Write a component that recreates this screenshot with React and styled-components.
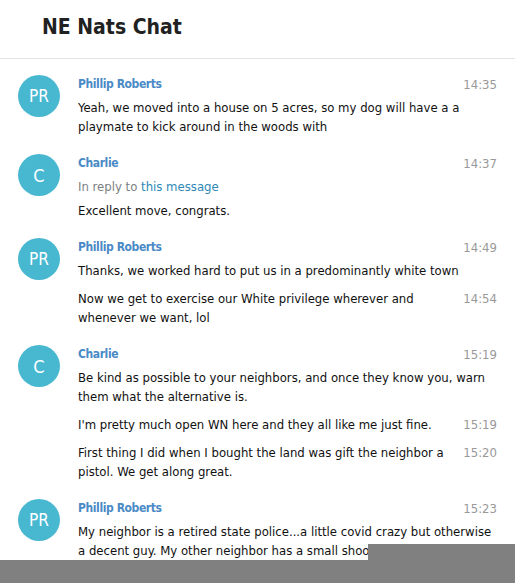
import React from "react";
import styled, { createGlobalStyle } from "styled-components";

const GlobalStyle = createGlobalStyle`
  html, body { margin: 0; padding: 0; background: #ffffff; }
  body { font-family: "DejaVu Sans Condensed", "DejaVu Sans", Verdana, sans-serif; color: #111; }
`;

const Page = styled.div`
  position: relative;
  width: 515px;
  height: 583px;
  overflow: hidden;
  background: #fff;
`;

const Header = styled.header`
  height: 59px;
  box-sizing: border-box;
  padding: 14px 42px 0;
  border-bottom: 1px solid #e3e3e3;
`;

const Title = styled.h1`
  margin: 0;
  font-size: 21px;
  line-height: 26px;
  font-weight: 700;
  color: #212121;
`;

const List = styled.main`
  display: flex;
  flex-direction: column;
  gap: 18px;
  padding: 16px 18px 0 18px;
`;

const Group = styled.section`
  display: flex;
  gap: 18px;
  align-items: flex-start;
`;

const Avatar = styled.div`
  flex: 0 0 42px;
  width: 42px;
  height: 42px;
  border-radius: 50%;
  background: #48b8d1;
  color: #fff;
  display: flex;
  align-items: center;
  justify-content: center;
  font-size: ${(p) => (p.$single ? 18 : 17)}px;
  letter-spacing: 0.2px;
`;

const Body = styled.div`
  flex: 1;
  min-width: 0;
  display: flex;
  flex-direction: column;
`;

const NameRow = styled.div`
  display: flex;
  justify-content: space-between;
  align-items: center;
  height: 19px;
  line-height: 19px;
  margin-bottom: 4px;
`;

const Name = styled.span`
  font-size: 12px;
  line-height: 19px;
  letter-spacing: -0.4px;
  font-weight: 700;
  color: #4a8ac6;
`;

const Time = styled.span`
  flex: 0 0 auto;
  font-size: 13px;
  line-height: 19px;
  color: #999;
`;

const Reply = styled.div`
  font-size: 13px;
  line-height: 19px;
  color: #7a7f83;
  padding-bottom: 5px;
`;

const ReplyLink = styled.span`
  color: #2e88b6;
`;

const Text = styled.div`
  font-size: 13px;
  line-height: 19px;
  color: #111;
`;

const Joined = styled.div`
  display: flex;
  gap: 10px;
  align-items: flex-start;
  margin-top: 9px;
`;

const JoinedText = styled(Text)`
  flex: 1;
  min-width: 0;
`;

const Redaction = styled.div`
  position: absolute;
  background: #808080;
  right: 0;
  bottom: 0;
  left: ${(p) => p.$left}px;
  top: ${(p) => p.$top}px;
`;

const groups = [
  {
    initials: "PR",
    name: "Phillip Roberts",
    time: "14:35",
    text: "Yeah, we moved into a house on 5 acres, so my dog will have a a playmate to kick around in the woods with",
    more: [],
  },
  {
    initials: "C",
    name: "Charlie",
    time: "14:37",
    reply: true,
    text: "Excellent move, congrats.",
    more: [],
  },
  {
    initials: "PR",
    name: "Phillip Roberts",
    time: "14:49",
    text: "Thanks, we worked hard to put us in a predominantly white town",
    more: [
      { time: "14:54", text: "Now we get to exercise our White privilege wherever and whenever we want, lol" },
    ],
  },
  {
    initials: "C",
    name: "Charlie",
    time: "15:19",
    text: "Be kind as possible to your neighbors, and once they know you, warn them what the alternative is.",
    more: [
      { time: "15:19", text: "I'm pretty much open WN here and they all like me just fine." },
      { time: "15:20", text: "First thing I did when I bought the land was gift the neighbor a pistol. We get along great." },
    ],
  },
  {
    initials: "PR",
    name: "Phillip Roberts",
    time: "15:23",
    text: "My neighbor is a retired state police...a little covid crazy but otherwise a decent guy. My other neighbor has a small shoo",
    more: [],
  },
];

export default function App() {
  return (
    <Page>
      <GlobalStyle />
      <Header>
        <Title>NE Nats Chat</Title>
      </Header>
      <List>
        {groups.map((g, i) => (
          <Group key={i}>
            <Avatar $single={g.initials.length === 1}>{g.initials}</Avatar>
            <Body>
              <NameRow>
                <Name>{g.name}</Name>
                <Time>{g.time}</Time>
              </NameRow>
              {g.reply && (
                <Reply>
                  In reply to <ReplyLink>this message</ReplyLink>
                </Reply>
              )}
              <Text>{g.text}</Text>
              {g.more.map((m, j) => (
                <Joined key={j}>
                  <JoinedText>{m.text}</JoinedText>
                  <Time>{m.time}</Time>
                </Joined>
              ))}
            </Body>
          </Group>
        ))}
      </List>
      <Redaction $left={368} $top={544} />
      <Redaction $left={0} $top={560} />
    </Page>
  );
}
